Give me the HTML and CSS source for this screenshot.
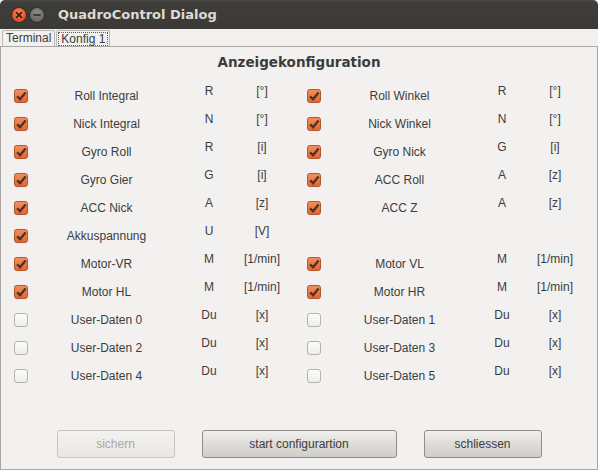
FILE: index.html
```html
<!DOCTYPE html>
<html>
<head>
<meta charset="utf-8">
<link rel="stylesheet" href="styles.css">
</head>
<body>
<div class="window">
  <div class="titlebar">
    <span class="wbtn close"><svg width="14" height="14" viewBox="0 0 14 14"><path d="M4.6 4.6 L9.4 9.4 M9.4 4.6 L4.6 9.4" stroke="#3a1a0c" stroke-width="1.6" stroke-linecap="round"/></svg></span>
    <span class="wbtn min"><svg width="14" height="14" viewBox="0 0 14 14"><path d="M4 7 H10" stroke="#2a2a28" stroke-width="1.6" stroke-linecap="round"/></svg></span>
    <span class="title">QuadroControl Dialog</span>
  </div>
  <div class="tabs">
    <span class="tab">Terminal</span>
    <span class="tab active"><span class="focus">Konfig 1</span></span>
  </div>
  <div class="panel">
    <h1 class="heading">Anzeigekonfiguration</h1>
    <div class="rows">
      <div class="row">
        <div class="item"><span class="cb on"></span><span class="label">Roll Integral</span><span class="sym">R</span><span class="unit">[°]</span></div>
        <div class="item"><span class="cb on"></span><span class="label">Roll Winkel</span><span class="sym">R</span><span class="unit">[°]</span></div>
      </div>
      <div class="row">
        <div class="item"><span class="cb on"></span><span class="label">Nick Integral</span><span class="sym">N</span><span class="unit">[°]</span></div>
        <div class="item"><span class="cb on"></span><span class="label">Nick Winkel</span><span class="sym">N</span><span class="unit">[°]</span></div>
      </div>
      <div class="row">
        <div class="item"><span class="cb on"></span><span class="label">Gyro Roll</span><span class="sym">R</span><span class="unit">[i]</span></div>
        <div class="item"><span class="cb on"></span><span class="label">Gyro Nick</span><span class="sym">G</span><span class="unit">[i]</span></div>
      </div>
      <div class="row">
        <div class="item"><span class="cb on"></span><span class="label">Gyro Gier</span><span class="sym">G</span><span class="unit">[i]</span></div>
        <div class="item"><span class="cb on"></span><span class="label">ACC Roll</span><span class="sym">A</span><span class="unit">[z]</span></div>
      </div>
      <div class="row">
        <div class="item"><span class="cb on"></span><span class="label">ACC Nick</span><span class="sym">A</span><span class="unit">[z]</span></div>
        <div class="item"><span class="cb on"></span><span class="label">ACC Z</span><span class="sym">A</span><span class="unit">[z]</span></div>
      </div>
      <div class="row">
        <div class="item"><span class="cb on"></span><span class="label">Akkuspannung</span><span class="sym">U</span><span class="unit">[V]</span></div>
        <div class="item"></div>
      </div>
      <div class="row">
        <div class="item"><span class="cb on"></span><span class="label">Motor-VR</span><span class="sym">M</span><span class="unit">[1/min]</span></div>
        <div class="item"><span class="cb on"></span><span class="label">Motor VL</span><span class="sym">M</span><span class="unit">[1/min]</span></div>
      </div>
      <div class="row">
        <div class="item"><span class="cb on"></span><span class="label">Motor HL</span><span class="sym">M</span><span class="unit">[1/min]</span></div>
        <div class="item"><span class="cb on"></span><span class="label">Motor HR</span><span class="sym">M</span><span class="unit">[1/min]</span></div>
      </div>
      <div class="row">
        <div class="item"><span class="cb"></span><span class="label">User-Daten 0</span><span class="sym">Du</span><span class="unit">[x]</span></div>
        <div class="item"><span class="cb"></span><span class="label">User-Daten 1</span><span class="sym">Du</span><span class="unit">[x]</span></div>
      </div>
      <div class="row">
        <div class="item"><span class="cb"></span><span class="label">User-Daten 2</span><span class="sym">Du</span><span class="unit">[x]</span></div>
        <div class="item"><span class="cb"></span><span class="label">User-Daten 3</span><span class="sym">Du</span><span class="unit">[x]</span></div>
      </div>
      <div class="row">
        <div class="item"><span class="cb"></span><span class="label">User-Daten 4</span><span class="sym">Du</span><span class="unit">[x]</span></div>
        <div class="item"><span class="cb"></span><span class="label">User-Daten 5</span><span class="sym">Du</span><span class="unit">[x]</span></div>
      </div>
    </div>
    <div class="buttons">
      <button class="btn small" disabled>sichern</button>
      <button class="btn wide">start configurartion</button>
      <button class="btn small">schliessen</button>
    </div>
  </div>
</div>
</body>
</html>
```

FILE: styles.css
```css
html, body {
  margin: 0;
  padding: 0;
  background: #f2f1f0;
}
.window {
  width: 598px;
  height: 470px;
  display: flex;
  flex-direction: column;
  font-family: "Liberation Sans", Arial, sans-serif;
  color: #3c3c3c;
}
.titlebar {
  height: 29px;
  flex: none;
  display: flex;
  align-items: center;
  padding-left: 12px;
  background: linear-gradient(#4a4945 0, #3e3d39 3px, #3b3a36 100%);
  border-radius: 5px 5px 0 0;
  box-sizing: border-box;
}
.wbtn {
  width: 14px;
  height: 14px;
  border-radius: 50%;
  display: block;
  margin-right: 4px;
}
.wbtn svg { display: block; }
.close {
  background: radial-gradient(circle at 50% 35%, #f58a5a 0, #e8592a 55%, #c8461c 100%);
  box-shadow: 0 0 0 1px #2e2d2a;
}
.min {
  background: radial-gradient(circle at 50% 35%, #8c8b87 0, #6d6c68 60%, #5a5955 100%);
  box-shadow: 0 0 0 1px #2e2d2a;
}
.title {
  margin-left: 10px;
  color: #dfdbd2;
  font-family: "DejaVu Sans", sans-serif;
  font-weight: bold;
  font-size: 13px;
}
.tabs {
  height: 18px;
  flex: none;
  display: flex;
  align-items: flex-end;
  padding-left: 2px;
  border-bottom: 1px solid #a9a8a5;
  box-sizing: border-box;
  font-size: 12px;
  color: #3c3c3c;
}
.tab {
  height: 16px;
  line-height: 15px;
  padding: 0 3px;
  border: 1px solid #b8b7b4;
  border-bottom: none;
  border-radius: 2px 2px 0 0;
  background: #f2f1f0;
  margin-right: 1px;
  box-sizing: border-box;
}
.tab.active { padding: 1px 1px 0; }
.focus {
  display: block;
  height: 14px;
  line-height: 13px;
  padding: 0 2px;
  border: 1px dotted #5c5c5c;
  box-sizing: border-box;
}
.panel {
  flex: 1;
  display: flex;
  flex-direction: column;
  border-left: 1px solid #a9a8a5;
  border-right: 1px solid #a9a8a5;
  border-bottom: 1px solid #a9a8a5;
}
.heading {
  margin: 6px 0 0;
  height: 18px;
  line-height: 18px;
  text-align: center;
  font-family: "DejaVu Sans", sans-serif;
  font-size: 13.5px;
  font-weight: bold;
  color: #3c3c3c;
}
.rows {
  margin-top: 11px;
  display: flex;
  flex-direction: column;
}
.row {
  height: 28px;
  display: flex;
}
.item {
  width: 294px;
  display: grid;
  grid-template-columns: 13px 14px 157px 48px 58px;
  grid-template-areas: ". cb label sym unit";
  align-items: center;
  font-size: 12px;
}
.item:first-child { width: 293px; }
.cb {
  grid-area: cb;
  width: 14px;
  height: 14px;
  box-sizing: border-box;
  border-radius: 3px;
  border: 1px solid #b5b3ae;
  background: linear-gradient(#fbfbfa, #efeeec);
}
.cb.on {
  border: none;
  border-radius: 0;
  background: url("data:image/svg+xml,%3Csvg xmlns='http://www.w3.org/2000/svg' width='14' height='14' viewBox='0 0 14 14'%3E%3Cdefs%3E%3ClinearGradient id='g' x1='0' y1='0' x2='0' y2='1'%3E%3Cstop offset='0' stop-color='%23f5905e'/%3E%3Cstop offset='1' stop-color='%23e2642f'/%3E%3C/linearGradient%3E%3C/defs%3E%3Crect x='0.5' y='0.5' width='13' height='13' rx='2.2' fill='url(%23g)' stroke='%23b4552a'/%3E%3Cpath d='M3.2 7.2 L6 10.2 L11.6 3.4' fill='none' stroke='%234c3228' stroke-width='2.3' stroke-linejoin='miter'/%3E%3C/svg%3E") no-repeat;
}
.label {
  grid-area: label;
  text-align: center;
}
.sym {
  grid-area: sym;
  text-align: center;
  margin-top: -10px;
}
.unit {
  grid-area: unit;
  text-align: center;
  margin-top: -10px;
  white-space: nowrap;
}
.buttons {
  margin-top: auto;
  margin-bottom: 11px;
  display: flex;
  justify-content: center;
  gap: 27px;
}
.btn {
  height: 28px;
  font-family: "Liberation Sans", Arial, sans-serif;
  font-size: 12px;
  color: #3c3c3c;
  border: 1px solid #8e8d89;
  border-radius: 3px;
  background: linear-gradient(#f1f0ee, #dddcd8 50%, #cfcec9);
  padding: 0;
}
.btn.small { width: 118px; }
.btn.wide { width: 195px; }
.btn:disabled {
  color: #a9a8a5;
  border-color: #c6c5c1;
  background: linear-gradient(#f3f2f0, #e8e7e4);
}
```
